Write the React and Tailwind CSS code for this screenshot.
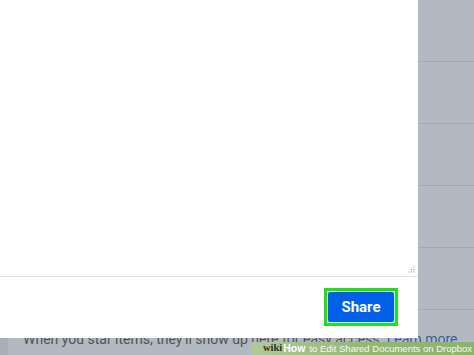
import React from 'react';

const App = () => {
    const rows = [0, 1, 2, 3, 4];

    return (
        <div className="relative w-[474px] h-[355px] overflow-hidden bg-[#b2b9c1] font-['Roboto',sans-serif]">
            {/* page behind the dialog */}
            <div className="flex h-full">
                <div className="w-[8px] bg-[#a8afb7]" />
                <div className="flex-1 min-w-0 flex flex-col">
                    <div className="flex flex-col">
                        {rows.map(r => (
                            <div key={r} className="h-[62px] border-b border-[#a3aab2]" />
                        ))}
                    </div>
                    <p className="mt-[22px] pl-[15px] text-[14px] leading-none text-[#50555c] whitespace-nowrap">
                        When you star items, they'll show up here for easy access. <span className="text-[#3d5f9c]">Learn more</span>
                    </p>
                </div>
            </div>

            {/* share dialog */}
            <div className="absolute left-0 top-0 w-[418px] h-[338px] bg-white flex flex-col">
                <div className="relative flex-1 border-b border-[#e6e6e6]">
                    <svg className="absolute right-[3px] bottom-[3px]" width="7" height="7" viewBox="0 0 7 7">
                        <circle cx="6" cy="1" r="0.7" fill="#b0b0b0" />
                        <circle cx="6" cy="3.5" r="0.7" fill="#b0b0b0" />
                        <circle cx="3.5" cy="3.5" r="0.7" fill="#b0b0b0" />
                        <circle cx="6" cy="6" r="0.7" fill="#b0b0b0" />
                        <circle cx="3.5" cy="6" r="0.7" fill="#b0b0b0" />
                        <circle cx="1" cy="6" r="0.7" fill="#b0b0b0" />
                    </svg>
                </div>
                <div className="h-[61px] flex justify-end items-start pt-[11px] pr-[20px]">
                    <div className="p-[3px] bg-[#1fe01f]">
                        <div className="p-[1px] bg-[#c8f5c8]">
                            <button className="w-[66px] h-[30px] bg-[#0061e8] rounded-[2px] text-white font-bold text-[15px]">
                                Share
                            </button>
                        </div>
                    </div>
                </div>
            </div>

            {/* watermark */}
            <div className="absolute left-[252px] top-[342px] w-[222px] h-[13px] bg-gradient-to-r from-[#b2c89a] via-[#95b774] to-[#8db36b] flex items-center pl-[11px] text-[9.5px] leading-none whitespace-nowrap font-['Liberation_Sans',sans-serif]">
                <span className="text-[#333326] font-bold font-['Liberation_Serif',serif] text-[10.5px]">wiki</span>
                <span className="text-white font-bold text-[10.5px] ml-[1px]">How</span>
                <span className="text-white/90 ml-[4px]">to Edit Shared Documents on Dropbox</span>
            </div>
        </div>
    );
};

export default App;
